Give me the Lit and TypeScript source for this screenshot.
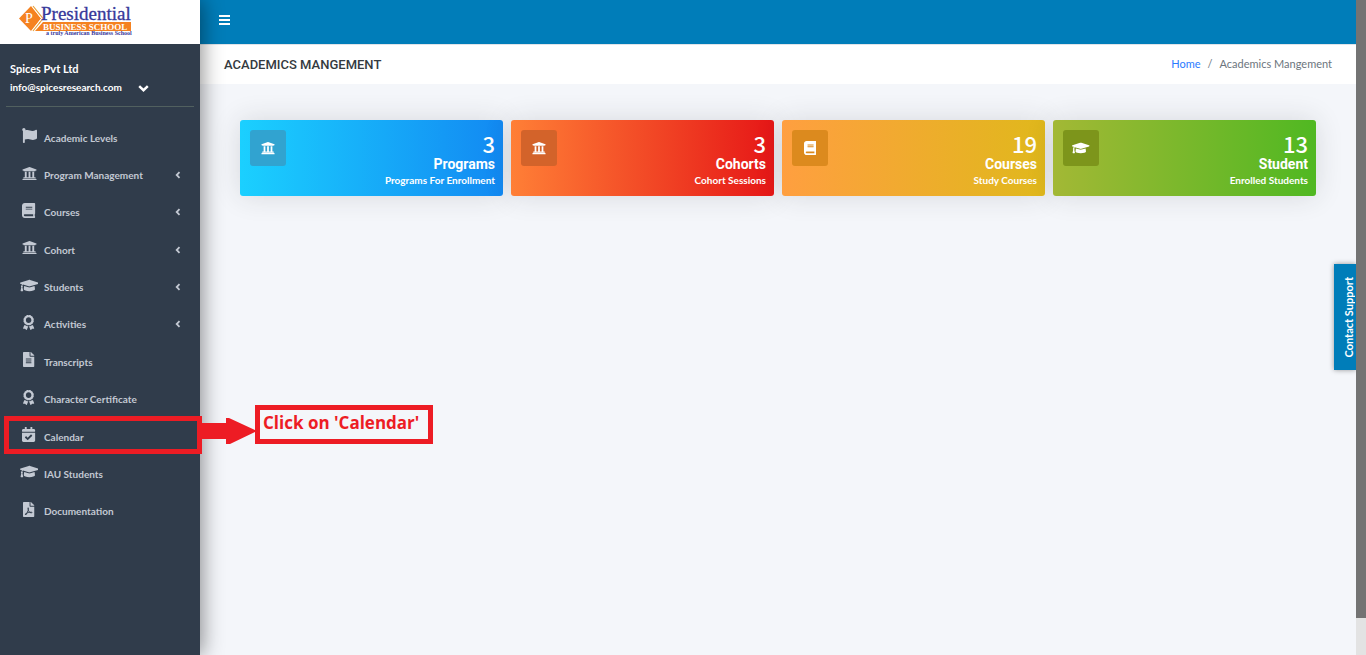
import { LitElement, html, svg, css, nothing } from "lit";
import { customElement, property } from "lit/decorators.js";

interface Glyph {
  width: number;
  path: string;
}

const GLYPHS: Record<string, Glyph> = {
  flag: {
    width: 512,
    path: "M349.565 98.783C295.978 98.783 251.721 64 184.348 64c-24.955 0-47.309 4.384-68.045 12.013a55.947 55.947 0 0 0 3.586-23.562C118.117 24.015 94.806 1.206 66.338.048 34.345-1.254 8 24.296 8 56c0 19.026 9.497 35.825 24 45.945V488c0 13.255 10.745 24 24 24h16c13.255 0 24-10.745 24-24v-94.4c28.311-12.064 63.582-22.122 114.435-22.122 53.588 0 97.844 34.783 165.217 34.783 48.169 0 86.667-16.294 122.505-40.858C506.84 359.452 512 349.571 512 339.045v-243.1c0-23.393-24.269-38.87-45.485-29.016-34.338 15.948-76.454 31.854-116.95 31.854z",
  },
  university: {
    width: 512,
    path: "M496 128v16a8 8 0 0 1-8 8h-24v12c0 6.627-5.373 12-12 12H60c-6.627 0-12-5.373-12-12v-12H24a8 8 0 0 1-8-8v-16a8 8 0 0 1 4.941-7.392l232-88a7.996 7.996 0 0 1 6.118 0l232 88A8 8 0 0 1 496 128zm-24 304H40c-13.255 0-24 10.745-24 24v16a8 8 0 0 0 8 8h464a8 8 0 0 0 8-8v-16c0-13.255-10.745-24-24-24zM96 192v192H60c-6.627 0-12 5.373-12 12v20h416v-20c0-6.627-5.373-12-12-12h-36V192h-64v192h-64V192h-64v192h-64V192H96z",
  },
  book: {
    width: 448,
    path: "M448 360V24c0-13.3-10.7-24-24-24H96C43 0 0 43 0 96v320c0 53 43 96 96 96h328c13.3 0 24-10.7 24-24v-16c0-7.5-3.5-14.3-8.9-18.7-4.2-15.4-4.2-59.3 0-74.7 5.4-4.3 8.9-11.1 8.9-18.6zM128 134c0-3.3 2.7-6 6-6h212c3.3 0 6 2.7 6 6v20c0 3.3-2.7 6-6 6H134c-3.3 0-6-2.7-6-6v-20zm0 64c0-3.3 2.7-6 6-6h212c3.3 0 6 2.7 6 6v20c0 3.3-2.7 6-6 6H134c-3.3 0-6-2.7-6-6v-20zm253.4 250H96c-17.7 0-32-14.3-32-32 0-17.6 14.4-32 32-32h285.4c-1.9 17.1-1.9 46.9 0 64z",
  },
  cap: {
    width: 640,
    path: "M622.34 153.2L343.4 67.5c-15.2-4.67-31.6-4.67-46.79 0L17.66 153.2c-23.54 7.23-23.54 38.36 0 45.59l48.63 14.94c-10.67 13.19-17.23 29.28-17.88 46.9C38.78 266.15 32 276.11 32 288c0 10.78 5.68 19.85 13.86 25.65L20.33 428.53C18.11 438.52 25.71 448 35.94 448h56.11c10.24 0 17.84-9.48 15.62-19.47L82.14 313.65C90.32 307.85 96 298.78 96 288c0-11.57-6.47-21.25-15.66-26.87.76-15.02 8.44-28.3 20.69-36.72L296.6 284.5c9.06 2.78 26.44 6.25 46.79 0l278.95-85.7c23.55-7.24 23.55-38.36 0-45.6zM352.79 315.09c-28.53 8.76-52.84 3.92-65.59 0l-145.02-44.55L128 384c0 35.35 85.96 64 192 64s192-28.65 192-64l-14.18-113.47-145.03 44.56z",
  },
  award: {
    width: 384,
    path: "M97.12 362.63c-8.69-8.69-4.16-6.24-25.12-11.85-9.51-2.55-17.87-7.45-25.43-13.32L1.2 448.7c-4.39 10.77 3.81 22.47 15.43 22.03l52.69-2.01L105.56 507c8 8.44 22.04 5.81 26.43-4.96l52.05-127.62c-10.84 6.04-22.87 9.58-35.31 9.58-19.5 0-37.82-7.59-51.61-21.37zM382.8 448.7l-45.37-111.24c-7.56 5.88-15.92 10.77-25.43 13.32-21.07 5.64-16.45 3.18-25.12 11.85-13.79 13.78-32.12 21.37-51.62 21.37-12.44 0-24.47-3.55-35.31-9.58L252 502.04c4.39 10.77 18.44 13.4 26.43 4.96l36.25-38.28 52.69 2.01c11.62.44 19.82-11.27 15.43-22.03zM263 340c15.28-15.55 17.03-14.21 38.79-20.14 13.89-3.79 24.75-14.84 28.47-28.98 7.48-28.4 5.54-24.97 25.95-45.75 10.17-10.35 14.14-25.44 10.42-39.58-7.47-28.38-7.48-24.42 0-52.83 3.72-14.14-.25-29.23-10.42-39.58-20.41-20.78-18.47-17.36-25.95-45.75-3.72-14.14-14.58-25.19-28.47-28.98-27.88-7.61-24.52-5.62-44.95-26.41-10.17-10.35-25-14.4-38.89-10.61-27.87 7.6-23.98 7.61-51.9 0-13.89-3.79-28.72.25-38.89 10.61-20.41 20.78-17.05 18.8-44.94 26.41-13.89 3.79-24.75 14.84-28.47 28.98-7.47 28.39-5.54 24.97-25.95 45.75-10.17 10.35-14.15 25.44-10.42 39.58 7.47 28.36 7.48 24.4 0 52.82-3.72 14.14.25 29.23 10.42 39.59 20.41 20.78 18.47 17.35 25.95 45.75 3.72 14.14 14.58 25.19 28.47 28.98C104.6 325.96 106.27 325 121 340c13.23 13.47 33.84 15.88 49.74 5.82a39.676 39.676 0 0 1 42.53 0c15.89 10.06 36.5 7.65 49.73-5.82zM97.66 175.96c0-53.03 42.24-96.02 94.34-96.02s94.34 42.99 94.34 96.02-42.24 96.02-94.34 96.02-94.34-42.99-94.34-96.02z",
  },
  file: {
    width: 384,
    path: "M224 136V0H24C10.7 0 0 10.7 0 24v464c0 13.3 10.7 24 24 24h336c13.3 0 24-10.7 24-24V160H248c-13.2 0-24-10.8-24-24zm64 236c0 6.6-5.4 12-12 12H108c-6.6 0-12-5.4-12-12v-8c0-6.6 5.4-12 12-12h168c6.6 0 12 5.4 12 12v8zm0-64c0 6.6-5.4 12-12 12H108c-6.6 0-12-5.4-12-12v-8c0-6.6 5.4-12 12-12h168c6.6 0 12 5.4 12 12v8zm0-72v8c0 6.6-5.4 12-12 12H108c-6.6 0-12-5.4-12-12v-8c0-6.6 5.4-12 12-12h168c6.6 0 12 5.4 12 12zm96-114.1v6.1H256V0h6.1c6.4 0 12.5 2.5 17 7l97.9 98c4.5 4.5 7 10.6 7 16.9z",
  },
  calendar: {
    width: 448,
    path: "M436 160H12c-6.627 0-12-5.373-12-12v-36c0-26.51 21.49-48 48-48h48V12c0-6.627 5.373-12 12-12h40c6.627 0 12 5.373 12 12v52h128V12c0-6.627 5.373-12 12-12h40c6.627 0 12 5.373 12 12v52h48c26.51 0 48 21.49 48 48v36c0 6.627-5.373 12-12 12zM12 192h424c6.627 0 12 5.373 12 12v260c0 26.51-21.49 48-48 48H48c-26.51 0-48-21.49-48-48V204c0-6.627 5.373-12 12-12zm333.296 95.947l-28.169-28.398c-4.667-4.705-12.265-4.736-16.97-.068L194.12 364.665l-45.98-46.352c-4.667-4.705-12.266-4.736-16.971-.068l-28.397 28.17c-4.705 4.667-4.736 12.265-.068 16.97l82.601 83.269c4.667 4.705 12.265 4.736 16.97.068l142.953-141.805c4.705-4.667 4.736-12.265.068-16.97z",
  },
  pdf: {
    width: 384,
    path: "M181.9 256.1c-5-16-4.9-46.9-2-46.9 8.4 0 7.6 36.9 2 46.9zm-1.7 47.2c-7.7 20.2-17.3 43.3-28.4 62.7 18.3-7 39-17.2 62.9-21.9-12.7-9.6-24.9-23.4-34.5-40.8zM86.1 428.1c0 .8 13.2-5.4 34.9-40.2-6.7 6.3-29.1 24.5-34.9 40.2zM248 160h136v328c0 13.3-10.7 24-24 24H24c-13.3 0-24-10.7-24-24V24C0 10.7 10.7 0 24 0h200v136c0 13.2 10.8 24 24 24zm-8 171.8c-20-12.2-33.3-29-42.7-53.8 4.5-18.5 11.6-46.6 6.2-64.2-4.7-29.4-42.4-26.5-47.8-6.8-5 18.3-.4 44.1 8.1 77-11.6 27.6-28.7 64.6-40.8 85.8-.1 0-.1.1-.2.1-27.1 13.9-73.6 44.5-54.5 68 5.6 6.9 16 10 21.5 10 17.9 0 35.7-18 61.1-61.8 25.8-8.5 54.1-19.1 79-23.2 21.7 11.8 47.1 19.5 64 19.5 29.2 0 31.2-32 19.7-43.4-13.9-13.6-54.3-9.7-73.6-7.2zM377 105L279 7c-4.5-4.5-10.6-7-17-7h-6v128h128v-6.1c0-6.3-2.5-12.4-7-16.9zm-74.1 255.3c4.1-2.7-2.5-11.9-42.8-9 37.1 15.8 42.8 9 42.8 9z",
  },
};

@customElement("app-icon")
class AppIcon extends LitElement {
  @property() name = "flag";

  static styles = css`
    :host {
      display: flex;
      justify-content: center;
      height: 15px;
    }
    svg {
      display: block;
      height: 100%;
      fill: currentColor;
    }
  `;

  render() {
    const g = GLYPHS[this.name];
    return html`<svg viewBox="0 0 ${g.width} 512" aria-hidden="true">${svg`<path d=${g.path} />`}</svg>`;
  }
}

@customElement("brand-logo")
class BrandLogo extends LitElement {
  static styles = css`
    :host {
      display: block;
    }
    svg {
      display: block;
    }
    .serif {
      font-family: "Liberation Serif", serif;
    }
    .name {
      font-size: 19px;
      fill: #37389a;
      stroke: #37389a;
      stroke-width: 0.3px;
    }
    .band {
      font-size: 9px;
      font-weight: 700;
      fill: #fff;
    }
    .tag {
      font-size: 6px;
      font-weight: 700;
      fill: #37389a;
    }
    .initial {
      font-size: 14px;
      fill: #fff;
    }
  `;

  render() {
    return html`
      <svg width="116" height="32" viewBox="0 0 116 32" role="img" aria-label="Presidential Business School">
        <rect x="20" y="18" width="92" height="9" fill="#f58220" />
        <path d="M14 2 L24.500 14.500 L14 27.500 H24 V2 Z" fill="#fff" />
        <path d="M24 18 V27 H16 Z" fill="#f58220" />
        <path d="M12 2 L22 14.500 L12 27 L0 14.500 Z" fill="#f58220" />
        <path d="M13 2 L22.500 14.500 L13 27" fill="none" stroke="#fff" stroke-width="1" />
        <path d="M14 2 L24 14.500 L14 27" fill="none" stroke="#e7a23b" stroke-width="1.200" />
        <text class="serif initial" x="6" y="19">P</text>
        <text class="serif name" x="22" y="16">Presidential</text>
        <text class="serif band" x="24" y="26">BUSINESS SCHOOL</text>
        <text class="serif tag" x="27" y="31">a truly American Business School</text>
      </svg>
    `;
  }
}

interface NavItem {
  icon: string;
  label: string;
  expandable?: boolean;
  callout?: string;
}

const NAV: NavItem[] = [
  { icon: "flag", label: "Academic Levels" },
  { icon: "university", label: "Program Management", expandable: true },
  { icon: "book", label: "Courses", expandable: true },
  { icon: "university", label: "Cohort", expandable: true },
  { icon: "cap", label: "Students", expandable: true },
  { icon: "award", label: "Activities", expandable: true },
  { icon: "file", label: "Transcripts" },
  { icon: "award", label: "Character Certificate" },
  { icon: "calendar", label: "Calendar", callout: "Click on 'Calendar'" },
  { icon: "cap", label: "IAU Students" },
  { icon: "pdf", label: "Documentation" },
];

@customElement("side-bar")
class SideBar extends LitElement {
  static styles = css`
    :host {
      display: flex;
      flex-direction: column;
      position: relative;
      z-index: 2;
      background: #303c4b;
      color: #fff;
      box-shadow: 2px 0 20px rgba(0, 0, 0, 0.45);
    }
    .brand {
      display: flex;
      height: 44px;
      padding: 4px 19px;
      box-sizing: border-box;
      background: #fff;
    }
    .account {
      margin: 0 6px 12px;
      padding: 16px 4px 10px;
      border-bottom: 1px solid #51605f;
      font-size: 11px;
      line-height: 18px;
      font-weight: 700;
    }
    .user {
      display: flex;
      align-items: center;
      gap: 16px;
      width: 100%;
      padding: 0;
      border: 0;
      background: none;
      color: inherit;
      font: inherit;
      font-size: 10px;
    }
    .user svg {
      margin-top: 2px;
    }
    .org {
      margin: 0;
    }
    ul {
      display: grid;
      grid-auto-rows: 1fr;
      height: 411px;
      margin: 0;
      padding: 0;
      list-style: none;
    }
    li {
      display: grid;
      position: relative;
    }
    .link {
      display: grid;
      grid-template-columns: 20px 1fr 6px;
      align-items: center;
      column-gap: 5px;
      padding: 0 19px;
      color: #c3c9d3;
      font-size: 10px;
      line-height: 16px;
      font-weight: 700;
      text-decoration: none;
    }
    app-icon {
      margin-bottom: 4px;
    }
    .outline {
      position: absolute;
      inset: -2px -2px 1px 4px;
      border: 5px solid #ed1c24;
      pointer-events: none;
    }
    .pointer {
      position: absolute;
      left: 100%;
      top: 0;
      display: flex;
      align-items: center;
      margin-top: -14px;
    }
    .pointer svg {
      flex: none;
      margin-top: 13px;
    }
    .note {
      flex: none;
      box-sizing: border-box;
      width: 178px;
      height: 39px;
      margin-left: -2px;
      padding-left: 3px;
      border: 5px solid #ed1c24;
      color: #ed1c24;
      font: 700 17px/25px "Open Sans", sans-serif;
      white-space: nowrap;
    }
  `;

  render() {
    return html`
      <div class="brand"><brand-logo></brand-logo></div>
      <div class="account">
        <p class="org">Spices Pvt Ltd</p>
        <button class="user" type="button">
          info@spicesresearch.com
          <svg width="11" height="7" viewBox="0 0 11 7" aria-hidden="true">
            <path d="M1.200 1.200 L5.500 5.200 L9.800 1.200" fill="none" stroke="#fff" stroke-width="2.500" />
          </svg>
        </button>
      </div>
      <nav>
        <ul>
          ${NAV.map(
            (item) => html`<li>
              <a class="link" href="#">
                <app-icon name=${item.icon}></app-icon>
                <span>${item.label}</span>
                ${item.expandable
                  ? html`<svg width="6" height="8" viewBox="0 0 6 8" aria-hidden="true">
                      <path d="M4.500 1.200 L1.700 4 L4.500 6.800" fill="none" stroke="currentColor" stroke-width="1.800" />
                    </svg>`
                  : nothing}
              </a>
              ${item.callout
                ? html`<span class="outline"></span>
                    <div class="pointer">
                      <svg width="57" height="28" viewBox="0 0 57 28" aria-hidden="true">
                        <path d="M2 6 H26 V1 H29 L57 14 L30 27 H26 V22 H2 Z" fill="#ed1c24" />
                      </svg>
                      <div class="note">${item.callout}</div>
                    </div>`
                : nothing}
            </li>`
          )}
        </ul>
      </nav>
    `;
  }
}

@customElement("stat-card")
class StatCard extends LitElement {
  @property() icon = "book";
  @property() value = "";
  @property() heading = "";
  @property() caption = "";
  @property({ reflect: true }) tone = "blue";

  static styles = css`
    :host {
      display: flex;
      justify-content: space-between;
      align-items: flex-start;
      box-sizing: border-box;
      height: 76px;
      padding: 10px 8px 8px 10px;
      border-radius: 3px;
      color: #fff;
      box-shadow: 0 0 28px rgba(40, 40, 50, 0.14);
    }
    :host([tone="blue"]) {
      background: linear-gradient(90deg, #1bd0ff, #1289f2);
      --badge: #31a3d0;
    }
    :host([tone="red"]) {
      background: linear-gradient(90deg, #ff7f36, #e61717);
      --badge: #d3632a;
    }
    :host([tone="amber"]) {
      background: linear-gradient(90deg, #ff9f40, #e0b81c);
      --badge: #dc8a1e;
    }
    :host([tone="green"]) {
      background: linear-gradient(90deg, #a3b835, #50b822);
      --badge: #7d951b;
    }
    .badge {
      display: grid;
      place-items: center;
      width: 36px;
      height: 36px;
      border-radius: 3px;
      background: var(--badge);
    }
    app-icon {
      height: 14px;
    }
    .text {
      display: grid;
      justify-items: end;
    }
    .value {
      font: 500 22px/26px "Noto Sans CJK SC", sans-serif;
    }
    .heading {
      margin: 0;
      font: 700 14px/16px Roboto, sans-serif;
    }
    .caption {
      font-size: 10px;
      line-height: 17px;
      font-weight: 700;
    }
  `;

  render() {
    return html`
      <span class="badge"><app-icon name=${this.icon}></app-icon></span>
      <div class="text">
        <span class="value">${this.value}</span>
        <h2 class="heading">${this.heading}</h2>
        <span class="caption">${this.caption}</span>
      </div>
    `;
  }
}

@customElement("app-root")
class AppRoot extends LitElement {
  static styles = css`
    :host {
      display: grid;
      grid-template-columns: 200px 1fr 10px;
      min-height: 100vh;
      background: #f4f6fa;
      font-family: Lato, sans-serif;
    }
    .page {
      position: relative;
      min-width: 0;
    }
    .topbar {
      display: flex;
      align-items: center;
      box-sizing: border-box;
      height: 44px;
      padding: 0 18px 4px;
      background: #007db9;
    }
    .toggle {
      display: grid;
      gap: 2px;
      padding: 0;
      border: 0;
      background: none;
      width: 11px;
      margin-left: 1px;
    }
    .toggle span {
      height: 2px;
      background: #fff;
    }
    .titlebar {
      display: flex;
      justify-content: space-between;
      align-items: center;
      box-sizing: border-box;
      height: 40px;
      padding: 0 24px;
      border-top: 1px solid #dfe3e8;
      background: #fff;
    }
    h1 {
      margin: 0;
      color: #343a40;
      font: 500 13px/20px Roboto, sans-serif;
    }
    ol {
      display: flex;
      gap: 7px;
      margin: 0;
      padding: 0 0 2px;
      list-style: none;
      color: #6c757d;
      font-size: 11px;
      line-height: 20px;
    }
    ol a {
      color: #2a7bff;
      text-decoration: none;
    }
    .cards {
      display: grid;
      grid-template-columns: repeat(4, 1fr);
      gap: 8px;
      padding: 36px 40px;
    }
    .support {
      position: absolute;
      right: 0;
      top: 264px;
      display: grid;
      place-items: center;
      width: 22px;
      height: 106px;
      padding: 0 0 0 8px;
      border: 0;
      background: #007db9;
      box-shadow: 0 0 5px rgba(0, 0, 0, 0.4);
      color: #fff;
      font: 700 11px/14px Lato, sans-serif;
    }
    .support span {
      writing-mode: vertical-rl;
      transform: rotate(180deg);
      white-space: nowrap;
    }
    .scroll {
      display: grid;
      grid-template-rows: 618fr 37fr;
      position: relative;
      z-index: 3;
      background: #e3e3e3;
    }
    .thumb {
      background: #737373;
    }
  `;

  render() {
    return html`
      <side-bar></side-bar>
      <div class="page">
        <header class="topbar">
          <button class="toggle" type="button" aria-label="Toggle menu"><span></span><span></span><span></span></button>
        </header>
        <div class="titlebar">
          <h1>ACADEMICS MANGEMENT</h1>
          <ol>
            <li><a href="#">Home</a></li>
            <li aria-hidden="true">/</li>
            <li>Academics Mangement</li>
          </ol>
        </div>
        <main class="cards">
          <stat-card tone="blue" icon="university" value="3" heading="Programs" caption="Programs For Enrollment"></stat-card>
          <stat-card tone="red" icon="university" value="3" heading="Cohorts" caption="Cohort Sessions"></stat-card>
          <stat-card tone="amber" icon="book" value="19" heading="Courses" caption="Study Courses"></stat-card>
          <stat-card tone="green" icon="cap" value="13" heading="Student" caption="Enrolled Students"></stat-card>
        </main>
        <button class="support" type="button"><span>Contact Support</span></button>
      </div>
      <div class="scroll"><div class="thumb"></div></div>
    `;
  }
}
